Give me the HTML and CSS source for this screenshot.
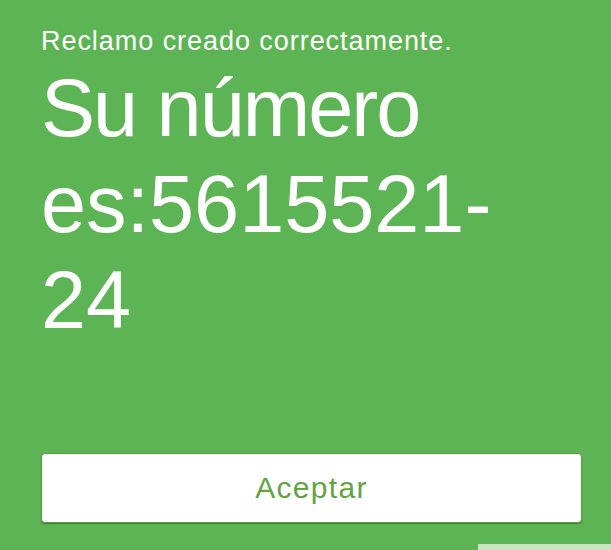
FILE: index.html
```html
<!DOCTYPE html>
<html lang="es">
<head>
<meta charset="utf-8">
<link rel="stylesheet" href="styles.css">
</head>
<body>
<main class="screen">
  <p class="notice">Reclamo creado correctamente.</p>
  <h1 class="number"><span class="lead">Su número</span> es:5615521-24</h1>
  <button class="accept" type="button">Aceptar</button>
  <div class="strip"></div>
</main>
</body>
</html>
```

FILE: styles.css
```css
html, body {
  margin: 0;
  padding: 0;
  height: 100%;
}

body {
  background: #5db454;
  font-family: "Liberation Sans", Arial, sans-serif;
  overflow: hidden;
}

.screen {
  position: relative;
  height: 550px;
  padding: 26px 29px 0 41px;
  box-sizing: border-box;
  display: flex;
  flex-direction: column;
  align-items: stretch;
}

.notice {
  margin: 0;
  color: #ffffff;
  font-size: 27px;
  line-height: 30px;
  letter-spacing: 0.95px;
}

.number {
  margin: 4px 0 0;
  max-width: 505px;
  color: #ffffff;
  font-weight: 400;
  font-size: 81px;
  line-height: 96px;
}

.lead {
  letter-spacing: -2px;
}

.accept {
  margin-top: 105px;
  height: 70px;
  background: #ffffff;
  border: 1px solid #5a9c3e;
  border-radius: 4px;
  box-shadow: 0 1px 1px rgba(40, 90, 20, 0.6);
  color: #62a43f;
  font-family: "Liberation Sans", Arial, sans-serif;
  font-size: 30px;
  letter-spacing: 1.3px;
  padding: 0;
}

.strip {
  position: absolute;
  right: 0;
  bottom: 0;
  width: 133px;
  height: 6px;
  background: #c8e6c2;
}
```
